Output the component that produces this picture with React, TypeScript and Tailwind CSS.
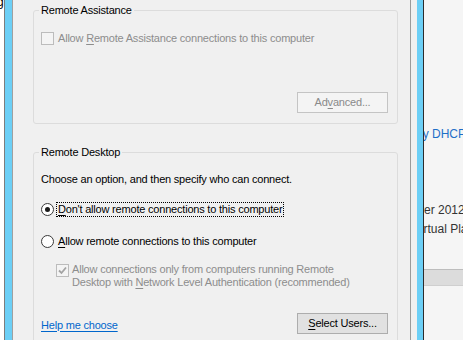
import React from "react";

function Checkbox({ checked }: { checked?: boolean }) {
  return (
    <span className="flex h-[13px] w-[13px] shrink-0 items-center justify-center border border-[#bcbcbc] bg-[#f4f4f4]">
      {checked && (
        <svg width="11" height="11" viewBox="0 0 11 11">
          <path d="M2 5.5 L4.5 8 L9 2.5" fill="none" stroke="#a3a3a3" strokeWidth="1.8" />
        </svg>
      )}
    </span>
  );
}

function Radio({ checked }: { checked?: boolean }) {
  return (
    <span className="flex h-[13px] w-[13px] shrink-0 items-center justify-center rounded-full border border-[#3a3a3a] bg-white">
      {checked && <span className="h-[5px] w-[5px] rounded-full bg-[#1a1a1a]" />}
    </span>
  );
}

export default function App() {
  return (
    <div className="flex h-[340px] w-[463px] overflow-hidden bg-white font-['Liberation_Sans',sans-serif] text-[11px] tracking-[-0.2px] text-black">
      {/* window edge behind, left */}
      <div className="w-[4px] overflow-hidden bg-white">
        <span className="-ml-[3px] -mt-[5px] block text-[12px] leading-[14px]">g</span>
      </div>
      <div className="w-px bg-[#7d7d7d]" />
      <div className="w-[7px] bg-[#6ccff6]" />
      <div className="w-px bg-[#a0a0a0]" />

      {/* dialog body */}
      <div className="flex w-[397px] flex-col bg-[#f0f0f0] pl-[20px] pr-[12px] pt-[3px]">
        <fieldset className="flex flex-col rounded-[3px] border border-[#dcdcdc] pb-[10px] pl-[7px] pr-[9px]">
          <legend className="-ml-[2px] px-[2px] leading-[15px]">Remote Assistance</legend>
          <div className="mt-[13px] flex h-[15px] items-center gap-[4px] text-[#8d8d8d]">
            <Checkbox />
            <span>
              Allow <u className="underline-offset-2">R</u>emote Assistance connections to this computer
            </span>
          </div>
          <button
            disabled
            className="mt-[46px] flex h-[21px] w-[91px] items-center justify-center self-end border border-[#c4c4c4] bg-[#f4f4f4] text-[#8a8a8a]"
          >
            <span>
              Ad<u className="underline-offset-2">v</u>anced...
            </span>
          </button>
        </fieldset>

        <fieldset className="mt-[21px] flex flex-col rounded-[3px] border border-[#dcdcdc] pb-[10px] pl-[7px] pr-[9px]">
          <legend className="-ml-[2px] px-[2px] leading-[15px]">Remote Desktop</legend>
          <p className="mt-[12px] leading-[15px]">Choose an option, and then specify who can connect.</p>

          <div className="mt-[15px] flex h-[15px] items-center gap-[2px]">
            <Radio checked />
            <span className="border border-dotted border-black px-[1px] leading-[13px]">
              <u className="underline-offset-2">D</u>on't allow remote connections to this computer
            </span>
          </div>

          <div className="mt-[17px] flex h-[15px] items-center gap-[3px]">
            <Radio />
            <span className="px-[1px] leading-[13px]">
              <u className="underline-offset-2">A</u>llow remote connections to this computer
            </span>
          </div>

          <div className="ml-[15px] mt-[14px] flex items-start gap-[3px] text-[#8d8d8d]">
            <span className="mt-[1px]">
              <Checkbox checked />
            </span>
            <span className="leading-[13px]">
              Allow connections only from computers running Remote
              <br />
              Desktop with <u className="underline-offset-2">N</u>etwork Level Authentication (recommended)
            </span>
          </div>

          <div className="mt-[24px] flex items-center justify-between">
            <a className="mt-[3px] text-[#0066cc] underline underline-offset-2">Help me choose</a>
            <button className="flex h-[21px] w-[91px] items-center justify-center border border-[#adadad] bg-[#e1e1e1]">
              <span>
                <u className="underline-offset-2">S</u>elect Users...
              </span>
            </button>
          </div>
        </fieldset>
      </div>

      {/* window edge behind, right */}
      <div className="w-px bg-[#9a9a9a]" />
      <div className="w-[6px] bg-[#f0f0f0]" />
      <div className="w-[6px] bg-[#6ccff6]" />
      <div className="w-px bg-[#2c2c2c]" />
      <div className="flex w-[39px] flex-col overflow-hidden bg-[#f5f5f5] pt-[126px] text-[12px] tracking-normal">
        <span className="-ml-[8px] whitespace-nowrap leading-[16px] text-[#1e6fc8]">by DHCP</span>
        <span className="mt-[60px] -ml-[6px] whitespace-nowrap leading-[16px] text-[#333]">ver 2012</span>
        <span className="mt-[3px] -ml-[11px] whitespace-nowrap leading-[16px] text-[#333]">Virtual Platform</span>
        <div className="mt-[32px] h-[17px] border-y border-t-[#bdbdbd] border-b-[#cfcfcf] bg-[#dcdcdc]" />
      </div>
    </div>
  );
}
